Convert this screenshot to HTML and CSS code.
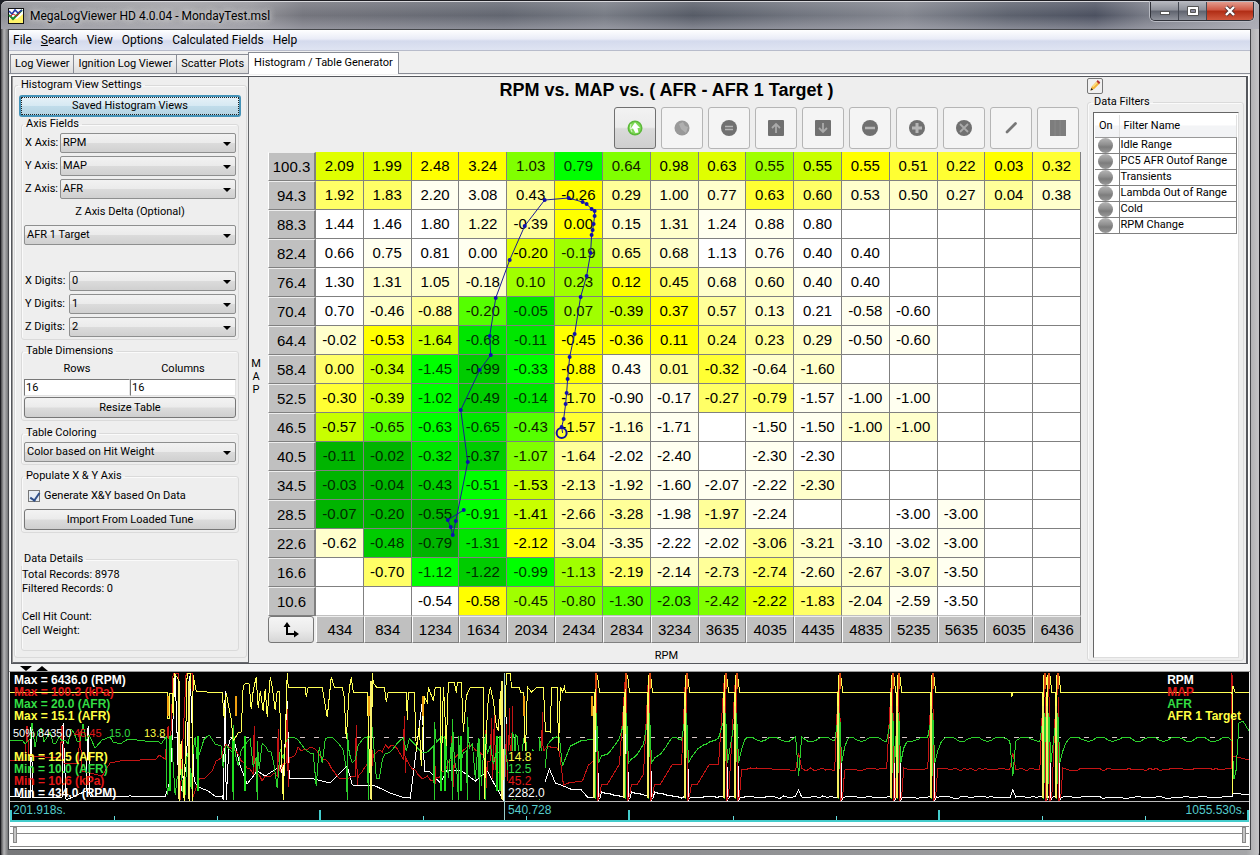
FILE: index.html
```html
<!DOCTYPE html>
<html lang="en">
<head>
<meta charset="utf-8">
<title>MegaLogViewer HD 4.0.04 - MondayTest.msl</title>
<link rel="stylesheet" href="styles.css">
</head>
<body>
<div class="window">
  <header class="titlebar">
    <svg class="app-icon" viewBox="0 0 16 16"><rect width="16" height="16" fill="#111"/><rect x="1" y="1" width="14" height="14" fill="#fff"/><path d="M1 12l4-2 4 1 6-5v9H1z" fill="#fff36a"/><path d="M1 7l4 4L14 2" fill="none" stroke="#1d8a2d" stroke-width="2"/><path d="M1 3l3 3 3-4 3 3 4-3" fill="none" stroke="#2038a8" stroke-width="1.5"/><path d="M2 9l3-3 4 2 3-4" fill="none" stroke="#c22" stroke-width="1"/></svg>
    <h1 class="title">MegaLogViewer HD 4.0.04 - MondayTest.msl</h1>
    <div class="win-controls">
      <button class="win-btn" aria-label="Minimize"><svg width="12" height="12" viewBox="0 0 12 12"><rect x="1.500" y="6.500" width="9" height="3" fill="#fff" stroke="#555"/></svg></button>
      <button class="win-btn" aria-label="Maximize"><svg width="12" height="12" viewBox="0 0 12 12"><path d="M.5 1.500h11v9H.5z" fill="#fff" stroke="#555"/><path d="M3.500 4.500h5v3h-5z" fill="#889" stroke="#555"/></svg></button>
      <button class="win-btn close" aria-label="Close"><svg width="12" height="12" viewBox="0 0 12 12"><path d="M2 2l8 8M10 2l-8 8" stroke="#533" stroke-width="4"/><path d="M2 2l8 8M10 2l-8 8" stroke="#fff" stroke-width="2.400"/></svg></button>
    </div>
  </header>
  <div class="client">
    <nav class="menubar">
      <button>File</button><button><u>S</u>earch</button><button>View</button><button>Options</button><button>Calculated Fields</button><button>Help</button>
    </nav>
    <div class="tabs" role="tablist">
      <button class="tab" role="tab">Log Viewer</button><button class="tab" role="tab">Ignition Log Viewer</button><button class="tab" role="tab">Scatter Plots</button><button class="tab active" role="tab" aria-selected="true">Histogram / Table Generator</button>
    </div>
    <main class="workspace">
      <aside class="settings">
        <fieldset class="group outer">
          <legend>Histogram View Settings</legend>
          <button class="btn focused">Saved Histogram Views</button>
          <fieldset class="group axis">
            <legend>Axis Fields</legend>
            <div class="field"><label for="xa">X Axis:</label><span class="combo"><select id="xa"><option>RPM</option></select></span></div>
            <div class="field"><label for="ya">Y Axis:</label><span class="combo"><select id="ya"><option>MAP</option></select></span></div>
            <div class="field"><label for="za">Z Axis:</label><span class="combo"><select id="za"><option>AFR</option></select></span></div>
            <label class="delta" for="zd">Z Axis Delta (Optional)</label>
            <span class="combo"><select id="zd"><option>AFR 1 Target</option></select></span>
            <div class="digits">
              <div class="field wide"><label for="xd">X Digits:</label><span class="combo"><select id="xd"><option>0</option></select></span></div>
              <div class="field wide"><label for="yd">Y Digits:</label><span class="combo"><select id="yd"><option>1</option></select></span></div>
              <div class="field wide"><label for="zdg">Z Digits:</label><span class="combo"><select id="zdg"><option>2</option></select></span></div>
            </div>
          </fieldset>
          <fieldset class="group dims">
            <legend>Table Dimensions</legend>
            <div class="dim-grid">
              <label for="rows">Rows</label><label for="cols">Columns</label>
              <input id="rows" type="text" value="16"><input id="cols" type="text" value="16">
            </div>
            <button class="btn">Resize Table</button>
          </fieldset>
          <fieldset class="group coloring">
            <legend><label for="tc">Table Coloring</label></legend>
            <span class="combo"><select id="tc"><option>Color based on Hit Weight</option></select></span>
          </fieldset>
          <fieldset class="group populate">
            <legend>Populate X &amp; Y Axis</legend>
            <label class="check"><input type="checkbox" checked>Generate X&amp;Y based On Data</label>
            <button class="btn">Import From Loaded Tune</button>
          </fieldset>
          <fieldset class="group details">
            <legend>Data Details</legend>
            <p>Total Records: 8978</p>
            <p>Filtered Records: 0</p>
            <p class="spaced">Cell Hit Count:</p>
            <p>Cell Weight:</p>
          </fieldset>
        </fieldset>
      </aside>
      <section class="histogram">
        <div class="y-label"><span>M</span><span>A</span><span>P</span></div>
        <div class="chart">
          <h2 class="chart-title">RPM vs. MAP vs. ( AFR - AFR 1 Target )</h2>
          <div class="toolbar">
            <button class="tool on" aria-label="Send up"><svg viewBox="0 0 16 16"><circle cx="8" cy="8" r="7.500" fill="#5cb83a"/><circle cx="8" cy="8" r="6" fill="#7fd957"/><path d="M8 2.500L13 8h-2.500l1 4.500-3 .5L6 8.500 3.500 9z" fill="#fff"/><path d="M4 4q-2 4 1 8" stroke="#d8f5c8" fill="none"/></svg></button>
            <button class="tool" aria-label="Send down"><svg viewBox="0 0 16 16"><circle cx="8" cy="8" r="7.500" fill="#999"/><path d="M5 4l4-2 2 4 3 1-2 6-5-4z" fill="#b0b0b0"/></svg></button>
            <button class="tool" aria-label="Set equal"><svg viewBox="0 0 16 16"><circle cx="8" cy="8" r="8" fill="#707070"/><path d="M4 6.500h8M4 9.500h8" stroke="#b5b5b5" stroke-width="1.500"/></svg></button>
            <button class="tool" aria-label="Increase"><svg viewBox="0 0 16 16"><rect width="16" height="16" rx="1" fill="#707070"/><path d="M8 13V4M4 8l4-4 4 4" stroke="#aaa" stroke-width="1.800" fill="none"/></svg></button>
            <button class="tool" aria-label="Decrease"><svg viewBox="0 0 16 16"><rect width="16" height="16" rx="1" fill="#707070"/><path d="M8 3v9M4 8l4 4 4-4" stroke="#aaa" stroke-width="1.800" fill="none"/></svg></button>
            <button class="tool" aria-label="Subtract"><svg viewBox="0 0 16 16"><circle cx="8" cy="8" r="8" fill="#707070"/><path d="M3 8h10" stroke="#b5b5b5" stroke-width="2.500"/></svg></button>
            <button class="tool" aria-label="Add"><svg viewBox="0 0 16 16"><circle cx="8" cy="8" r="8" fill="#707070"/><path d="M3 8h10M8 3v10" stroke="#b5b5b5" stroke-width="3"/></svg></button>
            <button class="tool" aria-label="Multiply"><svg viewBox="0 0 16 16"><circle cx="8" cy="8" r="8" fill="#707070"/><path d="M4 4l8 8M12 4l-8 8" stroke="#aaa" stroke-width="1.800"/></svg></button>
            <button class="tool" aria-label="Interpolate"><svg viewBox="0 0 16 16"><path d="M4 12l8.500-8.500" stroke="#777" stroke-width="2.800" stroke-linecap="round"/></svg></button>
            <button class="tool" aria-label="Smooth"><svg viewBox="0 0 16 16"><rect width="16" height="16" fill="#7d7d7d"/><path d="M5 0v16M10 0v16" stroke="#898989"/></svg></button>
          </div>
          <div class="grid-wrap">
            <table class="grid" id="grid"></table>
            <svg class="trace" viewBox="0 0 814 491" preserveAspectRatio="none" id="trace"></svg>
          </div>
          <div class="x-label">RPM</div>
        </div>
      </section>
      <aside class="filters">
        <button class="edit" aria-label="Edit filters"><svg viewBox="0 0 16 16"><path d="M2 14l1.500-5L10 2l4 3-7 7z" fill="#f3b53a"/><path d="M5 9l6-6" stroke="#fde08a" stroke-width="2"/><path d="M10 2l1.500-2L15 3l-1.500 2.500z" fill="#b53030"/><path d="M2 14l1-3.500L5.500 13z" fill="#222"/></svg></button>
        <fieldset class="group filter-group">
          <legend>Data Filters</legend>
          <div class="filter-box">
            <table class="filter-table">
              <thead><tr><th>On</th><th>Filter Name</th></tr></thead>
              <tbody>
                <tr><td><i class="lamp"></i></td><td>Idle Range</td></tr>
                <tr><td><i class="lamp"></i></td><td>PC5 AFR Outof Range</td></tr>
                <tr><td><i class="lamp"></i></td><td>Transients</td></tr>
                <tr><td><i class="lamp"></i></td><td>Lambda Out of Range</td></tr>
                <tr><td><i class="lamp"></i></td><td>Cold</td></tr>
                <tr><td><i class="lamp"></i></td><td>RPM Change</td></tr>
              </tbody>
            </table>
          </div>
        </fieldset>
      </aside>
    </main>
    <div class="splitter"><i class="down"></i><i class="up"></i></div>
    <section class="log">
      <svg class="plot" id="plot" viewBox="10 671 1238 150" preserveAspectRatio="none"></svg>
      <div class="legend-block max"><span class="w">Max = 6436.0 (RPM)</span><span class="r">Max = 100.3 (kPa)</span><span class="g">Max = 20.0 (AFR)</span><span class="y">Max = 15.1 (AFR)</span></div>
      <div class="mid"><span class="w">50%</span><span class="w">8435.0</span><span class="r">45.45</span><span class="g">15.0</span><span class="y">13.8</span></div>
      <div class="legend-block min"><span class="y">Min = 12.5 (AFR)</span><span class="g">Min = 10.0 (AFR)</span><span class="r">Min = 10.6 (kPa)</span><span class="w">Min = 434.0 (RPM)</span></div>
      <div class="legend-block cursor"><span class="y">14.8</span><span class="g">12.5</span><span class="r">45.2</span><span class="w">2282.0</span></div>
      <div class="legend-block names"><span class="w">RPM</span><span class="r">MAP</span><span class="g">AFR</span><span class="y">AFR 1 Target</span></div>
      <span class="time start">201.918s.</span><span class="time now">540.728</span><span class="time end">1055.530s.</span>
    </section>
    <div class="slider">
      <input type="range" min="0" max="100" value="0" aria-label="Range start">
      <input type="range" min="0" max="100" value="100" aria-label="Range end">
    </div>
  </div>
</div>
<script src="app.js"></script>
</body>
</html>
```
FILE: styles.css
```css
* { box-sizing: border-box; }
body { margin: 0; background: #1c1f26; font: 11px/14px Roboto, "Noto Sans", sans-serif; color: #000; }
button, input, select { font: inherit; color: inherit; margin: 0; padding: 0; }
p, h1, h2 { margin: 0; font-weight: normal; }

.window {
  min-height: 100vh; display: flex; flex-direction: column; padding: 0 8px 7px 7px;
  border: 1px solid #1d1d22; border-radius: 7px 7px 5px 5px;
  background: linear-gradient(90deg, #4a4a4c 0, #b4b4b6 3px, #77787a 7px, #8c8d90 50%, #a5a6a8 99%, #c5c5c7 100%);
}
.titlebar {
  height: 28px; margin: 0 -8px 0 -7px; padding-left: 7px; display: flex; align-items: center;
  border-top: 1px solid #d8d8dc; border-radius: 6px 6px 0 0;
  background: linear-gradient(180deg, rgba(220,220,225,.2), rgba(0,0,0,0) 50%, rgba(180,180,190,.5)),
    linear-gradient(90deg, #8f9095 0, #a3a3a7 14%, #96969b 20%, #74757d 24%, #626670 40%, #777b84 48%, #565b66 55%, #6f737d 63%, #83868f 72%, #5d626e 80%, #4c5160 87%, #777a85 91%, #a9abb2 100%);
}
.app-icon { width: 16px; height: 16px; margin-right: 6px; }
.title { flex: 1; font-size: 12px; text-shadow: 0 0 6px #ddd, 0 0 6px #ddd; }
.win-controls { display: flex; align-self: flex-start; margin-right: 5px; border: 1px solid #30323a; border-top: 0; border-radius: 0 0 5px 5px; overflow: hidden; box-shadow: 0 0 0 1px #b9bbc3; }
.win-btn { width: 28px; height: 18px; border: 0; border-right: 1px solid #444852; background: linear-gradient(#b4b6bd, #8d9099 45%, #5f636e 50%, #8f929b); display: grid; place-items: center; }
.win-btn.close { width: 46px; border-right: 0; background: linear-gradient(#e39b8d, #cf5743 45%, #b02c14 50%, #d0583e); }

.client { flex: 1; display: flex; flex-direction: column; background: #f0f0f0; border: 1px solid #44464a; }
.menubar { height: 21px; display: flex; align-items: center; gap: 9px; padding-left: 4px; font-size: 12px; background: linear-gradient(#fff, #e9ecf7 45%, #d4daed 55%, #dfe4f2); border-bottom: 1px solid #b8bccb; }
.menubar button { border: 0; background: none; white-space: nowrap; }
.tabs { height: 23px; display: flex; align-items: flex-end; padding: 2px 1px 0; border-bottom: 1px solid #898c95; }
.tab { height: 19px; padding: 0 4px; border: 1px solid #898c95; border-bottom: 0; border-right: 0; background: linear-gradient(#f4f4f4, #ebebeb 50%, #dcdcdc); white-space: nowrap; }
.tab.active { height: 22px; border-right: 1px solid #898c95; background: #fff; padding: 0 5px 2px; margin-bottom: -1px; position: relative; }

.workspace { flex: 1; display: grid; grid-template-columns: 237px 1fr 159px; margin: 2px 2px 0; border: 1px solid #55575c; border-width: 1px 2px 1px 1px; background: #eee; outline: 1px solid #fff; }
.settings { border-right: 1px solid #66686c; border-bottom: 1px solid #66686c; border-left: 1px solid #999; padding: 1px 1px 3px 1px; }
.group { margin: 0; padding: 0; min-width: 0; border: 1px solid #dadada; border-radius: 3px; box-shadow: inset 1px 1px #fafafa; }
.group legend { padding: 0 3px; margin-left: -1px; height: 14px; white-space: nowrap; }
.outer { padding: 3px 5px 6px 4px; }
.outer > .group { margin: 0 2px; padding: 2px 2px; }
.outer > .group > legend { margin-left: -1px; }
.btn { display: block; width: 100%; height: 21px; border: 1px solid #777; border-radius: 3px; background: linear-gradient(#f3f3f3, #ebebeb 48%, #dcdcdc 52%, #cfcfcf); }
.btn.focused { height: 22px; border: 2px solid #4593b8; background: linear-gradient(#e6f1f7, #d6e9f3 48%, #c0dcea 52%, #b4d3e2); outline: 1px dotted #222; outline-offset: -3px; }
.field { display: grid; grid-template-columns: 36px 1fr; align-items: center; margin-bottom: 3px; }
.field.wide { grid-template-columns: 45px 1fr; }
.field label { white-space: nowrap; padding-left: 1px; }
.combo { position: relative; display: block; }
.combo select { display: block; width: 100%; height: 20px; padding-left: 2px; appearance: none; border: 1px solid #8e8f8f; border-radius: 2px; background: linear-gradient(#f2f2f2, #ebebeb 48%, #dbdbdb 52%, #d0d0d0); }
.combo::after { content: ""; position: absolute; right: 5px; top: 9px; border: 4px solid transparent; border-top-color: #000; border-bottom: 0; pointer-events: none; }
.delta { display: block; text-align: center; margin: 6px 0; }
.digits { margin-top: 26px; }
.digits .field:last-child { margin-bottom: 0; }
.outer > .dims { margin-top: 4px; }
.dim-grid { display: grid; grid-template-columns: 1fr 1fr; text-align: center; row-gap: 3px; padding-top: 2px; margin-bottom: 1px; }
.dim-grid input { width: 100%; height: 17px; border: 1px solid #e3e3e3; border-top-color: #777; border-left-color: #777; background: #fff; padding-left: 1px; }
.outer > .coloring { margin-top: 5px; }
.outer > .populate { margin-top: 4px; }
.check { display: flex; align-items: center; margin: 4px 0 6px 4px; height: 14px; gap: 4px; }
.check input { appearance: none; width: 12px; height: 12px; border: 1px solid #777; background: #e6edf5; position: relative; }
.check input:checked::after { content: ""; position: absolute; left: 3px; top: 0; width: 4px; height: 8px; border: solid #2f4f8a; border-width: 0 2px 2px 0; transform: rotate(35deg); }
.outer > .details { margin-top: 19px; min-height: 99px; padding-left: 0; }
.details p.spaced { margin-top: 14px; }

.histogram { display: grid; grid-template-columns: 14px 1fr; }
.y-label { display: flex; flex-direction: column; justify-content: center; align-items: center; line-height: 13px; padding-top: 12px; }
.chart { min-width: 0; padding: 2px 6px 0 5px; }
.chart-title { font: bold 18px/22px "Liberation Sans", Arial, sans-serif; text-align: center; padding-right: 16px; }
.toolbar { display: flex; justify-content: flex-end; gap: 5px; margin: 6px 2px 3px; }
.tool { width: 42px; height: 42px; border: 1px solid #b5b5b5; border-radius: 3px; background: #f4f4f4; display: grid; place-items: center; }
.tool svg { width: 16px; height: 16px; }
.tool.on { border-color: #707070; background: linear-gradient(#f2f2f2, #ebebeb 48%, #dadada 52%, #cfcfcf); }
.grid-wrap { position: relative; }
.grid { width: 100%; table-layout: fixed; border-collapse: separate; border-spacing: 0; font: 15px/28px "Liberation Sans", Arial, sans-serif; text-align: center; }
.grid td, .grid th { padding: 0; height: 29px; font-weight: normal; border-right: 1px solid #808080; border-bottom: 1px solid #808080; white-space: nowrap; }
.grid tr:nth-child(16) td { border-bottom-color: #c0c0c0; }
.grid th { background: #c0c0c0; border-left: 1px solid #fff; border-top: 1px solid #eee; line-height: 27px; }
.grid tr:last-child th { height: 27px; line-height: 25px; }
.grid .row-head { width: 48px; border-right: 2px solid #808080; }
.corner { width: 46px; height: 27px; border: 1px solid #777; border-radius: 3px; background: linear-gradient(#f5f5f5, #ebebeb 50%, #d6d6d6); display: grid; place-items: center; }
.grid .corner-cell { border: 0; background: #eee; }
.c0 { background: #fff; } .ca { background: #fffff0; } .cb { background: #ffffcc; } .cc { background: #ffff99; }
.cd { background: #ffff66; } .ce { background: #ffff33; } .cf { background: #ffff00; } .cg { background: #e0ff00; }
.ch { background: #c8ff00; } .ci { background: #a0ff00; } .cj { background: #80ff00; } .ck { background: #55ff00; }
.cl { background: #00ff00; } .cm { background: #00e600; } .cn { background: #00cc00; } .co { background: #00b400; }
.cj, .ck, .ci { color: #121a00; } .cl, .cm { color: #003600; } .cn, .co { color: #002c00; }
.trace { position: absolute; left: 0; top: 0; width: 100%; height: 100%; pointer-events: none; }
.x-label { text-align: center; margin-top: 6px; padding-right: 16px; }

.filters { display: flex; flex-direction: column; padding: 1px 2px 2px 0; }
.edit { width: 16px; height: 16px; padding: 1px; border: 1px solid #777; border-radius: 2px; background: #f0f0f0; display: grid; }
.filter-group { flex: 1; display: flex; flex-direction: column; margin-top: 1px; padding: 3px 4px 2px 5px; }
.filter-group legend { margin-left: -2px; }
.filter-box { height: 546px; background: #fff; border: 1px solid #ddd; border-top-color: #666; border-left-color: #666; padding: 2px 1px 0 1px; }
.filter-table { width: 100%; border-collapse: collapse; table-layout: fixed; }
.filter-table th { height: 22px; font-weight: normal; text-align: left; padding: 0 0 0 4px; background: linear-gradient(#fff, #fff 45%, #f3f4f6 50%, #f1f2f4); border-right: 1px solid #e0e0e0; border-bottom: 1px solid #999; white-space: nowrap; }
.filter-table th:first-child { width: 24px; padding-left: 4px; }
.filter-table td { height: 16px; padding: 0 0 0 1px; line-height: 14px; border: 1px solid #808080; white-space: nowrap; }
.filter-table td:first-child { border-left: 0; }
.lamp { display: block; width: 15px; height: 15px; margin-left: 2px; border-radius: 50%; background: linear-gradient(#b5b5b5, #8f8f8f 45%, #7c7c7c 60%, #999); }

.splitter { height: 8px; display: flex; gap: 4px; padding: 2px 11px 0; background: #f4f4f4; border-bottom: 1px solid #999; }
.splitter i { width: 12px; height: 5px; background: #000; }
.splitter .down { clip-path: polygon(0 0, 100% 0, 50% 100%); }
.splitter .up { clip-path: polygon(50% 0, 100% 100%, 0 100%); }
.log { position: relative; height: 150px; margin: 0 1px; background: #000; font: 12px/12px "Liberation Sans", Arial, sans-serif; }
.plot { display: block; width: 100%; height: 100%; shape-rendering: crispEdges; }
.plot path { fill: none; vector-effect: non-scaling-stroke; }
.legend-block { position: absolute; display: flex; flex-direction: column; white-space: nowrap; }
.max, .min, .names { font-weight: bold; left: 4px; }
.max { top: 2px; } .min { top: 79px; } .cursor { top: 79px; left: 40.200%; background: #000; }
.names { top: 2px; left: auto; right: 8px; }
.mid { position: absolute; top: 55px; left: 3px; display: grid; grid-template-columns: 25px 36px 35px 35px 30px; font-size: 11px; }
.w { color: #fff; } .r { color: #e01818; } .g { color: #33dd44; } .y { color: #ffff44; }
.time { position: absolute; top: 132px; color: #5cc; }
.start { left: 3px; } .now { left: 40.200%; } .end { right: 4px; }
.slider { height: 27px; margin: 0 1px; display: grid; align-items: start; padding: 4px 0; background: linear-gradient(#fff 0 4px, #888 4px 5px, #fff 5px 11px, #888 11px 12px, #fff 12px 24px, #888 24px 25px, #fff 25px); }
.slider input { grid-area: 1 / 1; appearance: none; width: 100%; height: 18px; padding: 0 3px; background: none; pointer-events: none; }
.slider input::-webkit-slider-thumb { appearance: none; pointer-events: auto; width: 4px; height: 16px; background: #c4c4c4; border: 1px solid #888; }
```
FILE: app.js
```js
const rowHeads = ['100.3','94.3','88.3','82.4','76.4','70.4','64.4','58.4','52.5','46.5','40.5','34.5','28.5','22.6','16.6','10.6'];
const colHeads = [434,834,1234,1634,2034,2434,2834,3234,3635,4035,4435,4835,5235,5635,6035,6436];
const values = [
  '2.09 1.99 2.48 3.24 1.03 0.79 0.64 0.98 0.63 0.55 0.55 0.55 0.51 0.22 0.03 0.32',
  '1.92 1.83 2.20 3.08 0.43 -0.26 0.29 1.00 0.77 0.63 0.60 0.53 0.50 0.27 0.04 0.38',
  '1.44 1.46 1.80 1.22 -0.39 0.00 0.15 1.31 1.24 0.88 0.80',
  '0.66 0.75 0.81 0.00 -0.20 -0.19 0.65 0.68 1.13 0.76 0.40 0.40',
  '1.30 1.31 1.05 -0.18 0.10 0.23 0.12 0.45 0.68 0.60 0.40 0.40',
  '0.70 -0.46 -0.88 -0.20 -0.05 0.07 -0.39 0.37 0.57 0.13 0.21 -0.58 -0.60',
  '-0.02 -0.53 -1.64 -0.68 -0.11 -0.45 -0.36 0.11 0.24 0.23 0.29 -0.50 -0.60',
  '0.00 -0.34 -1.45 -0.99 -0.33 -0.88 0.43 0.01 -0.32 -0.64 -1.60',
  '-0.30 -0.39 -1.02 -0.49 -0.14 -1.70 -0.90 -0.17 -0.27 -0.79 -1.57 -1.00 -1.00',
  '-0.57 -0.65 -0.63 -0.65 -0.43 -1.57 -1.16 -1.71 . -1.50 -1.50 -1.00 -1.00',
  '-0.11 -0.02 -0.32 -0.37 -1.07 -1.64 -2.02 -2.40 . -2.30 -2.30',
  '-0.03 -0.04 -0.43 -0.51 -1.53 -2.13 -1.92 -1.60 -2.07 -2.22 -2.30',
  '-0.07 -0.20 -0.55 -0.91 -1.41 -2.66 -3.28 -1.98 -1.97 -2.24 . . -3.00 -3.00',
  '-0.62 -0.48 -0.79 -1.31 -2.12 -3.04 -3.35 -2.22 -2.02 -3.06 -3.21 -3.10 -3.02 -3.00',
  '. -0.70 -1.12 -1.22 -0.99 -1.13 -2.19 -2.14 -2.73 -2.74 -2.60 -2.67 -3.07 -3.50',
  '. . -0.54 -0.58 -0.45 -0.80 -1.30 -2.03 -2.42 -2.22 -1.83 -2.04 -2.59 -3.50'
].map(r => r.split(' '));
// One letter per cell: hit weight from white (0) through yellow (f) to dark green (o).
const weights = [
  'ggffjljhgihfeefe', 'ddaacfcbbedbbbcb', '000bcfbbaa000000', '0a0agicb0a000000',
  '0bbbiifdbba00000', '0bckmihfcb0a0000', 'bfhmmfffdcbaa000', 'dhlnlfacebb00000',
  'ehlnmeaaddaaa000', 'hklmkeba0aabb000', 'oomnjcaa0a000000', 'oonlhcbaaab00000',
  'ooolhccaca000a00', 'bnomfcb0acbaaa00', '0dlnlidbcdbbba00', '000fijkkjgdba000'
];

const grid = document.getElementById('grid');
grid.innerHTML = rowHeads.map((h, r) =>
  `<tr><th class="row-head">${h}</th>` +
  colHeads.map((_, c) => {
    const v = values[r][c];
    return `<td class="c${weights[r][c]}">${v && v !== '.' ? v : ''}</td>`;
  }).join('') + '</tr>').join('') +
  '<tr><th class="corner-cell"><button class="corner" aria-label="Swap axes"><svg width="18" height="18" viewBox="0 0 18 18"><path d="M5 3v10h10" fill="none" stroke="#000" stroke-width="2"/><path d="M1.500 6L5 1l3.500 5zM12 9.500l5 3.500-5 3.500z"/></svg></button></th>' +
  colHeads.map(c => `<th>${c}</th>`).join('') + '</tr>';

const route = [[464,510],[448,520],[451,527],[453,535],[456,521],[468,462],[461,410],[480,370],[491,355],[490,336],[496,298],[510,260],[525,226],[545,200],[569,198],[583,202],[587,204],[592,209],[595,211],[595,216],[594,224],[593,230],[592,235],[591,253],[587,276],[581,297],[575,334],[570,357],[568,379],[567,393],[566,404],[564,419],[562,427],[563,433]]
  .map(([x, y]) => [x - 268, y - 152]);
document.getElementById('trace').innerHTML =
  `<polyline points="${route.join(' ')}" fill="none" stroke="#1a1a99"/>` +
  route.slice(0, -1).map(([x, y]) => `<circle cx="${x}" cy="${y}" r="2" fill="#1010b0"/>`).join('') +
  '<circle cx="294" cy="281" r="5" fill="none" stroke="#1010a0" stroke-width="2"/>';

let seed = 7;
const rnd = (a, b) => { seed = (seed * 16807) % 2147483647; return a + (b - a) * (seed / 2147483647); };
const spikes = [595, 625, 648, 685, 724, 735, 838, 891, 897, 931, 1043, 1047, 1056];
const yellow = [], green = [], red = [], white = [];
const add = (a, x, y) => a.push([Math.round(x), Math.round(y)]);
const addAll = (a, text) => text.split(' ').forEach(p => add(a, ...p.split(',').map(Number)));

// Idle stretch at the left edge.
addAll(yellow, '10,691 167,691 167,717 169,717 169,692 172,692 173,715 174,672 178,678 179,800 181,740 184,800 187,672 190,672 189,800 192,800 193,674 196,690 207,691 222,691');
addAll(green, '10,739 22,739 25,743 30,738');
for (let x = 32; x < 92; x += 3) add(green, x, rnd(722, 748));
addAll(green, '95,747 102,739 110,736 113,741 120,743 128,738 145,740 158,740 161,743 166,736');
for (let x = 167; x < 196; x += 2) add(green, x, rnd(725, 800));
addAll(green, '197,760 204,738 209,734 215,743 221,745');
addAll(red, '10,759 25,759 27,725 29,755 60,757 62,725 64,762 78,762 80,730 82,770 102,775 110,762 120,760 140,759 156,758 159,754 165,758 168,725 170,755 173,672 178,672 180,799 186,672 192,672 192,799 199,778 205,777 212,770 216,760 221,757');
addAll(white, '10,795 30,797 31,725 33,797 62,796 63,722 66,799 86,790 88,725 90,796 130,795 165,796 170,780 175,672 179,799 186,765 190,672 194,780 198,786 208,790 216,796 222,795');

// Driving section with rapidly changing load.
addAll(yellow, '222,691 224,717 226,692 231,718 233,740 238,732 241,731 243,685 246,682 249,683 251,708 253,690 256,676 258,707 260,690 263,710 265,688 267,716 270,676 272,686 275,709 277,690 279,690 283,799 285,740 287,672 288,686 305,686 306,696 308,686 322,686 327,716 331,676 334,686 342,686 344,696 346,738 349,688 351,676 353,691 367,691 369,757 371,799 372,672 373,682 376,686 384,686 386,701 388,691 406,691 407,719 408,691 414,691 416,750 419,725 421,765 424,696 427,702 428,686 433,700 435,686 440,686 441,770 443,686 444,701 446,745 448,681 454,681 456,692 457,681 461,681 463,731 466,695 470,686 483,686 484,798 486,730 488,696 490,686 493,700 496,725 498,730 500,690 502,799 506,672 510,672 511,686 519,686 520,691 523,691 525,755 527,686 531,691 537,686 543,686 545,730 550,731 551,686 557,686 558,750 560,686 562,691 564,686 565,691 592,691');
addAll(white, '222,795 223,799 225,690 226,799 229,740 233,735 240,765 247,783 257,770 265,775 280,765 283,777 287,700 289,777 310,777 330,782 347,765 352,784 375,785 390,792 402,796 410,797 422,700 424,770 430,771 440,782 446,770 460,769 475,780 487,770 495,785 503,799 505,690 507,775 535,777 545,780 549,768 555,782 563,785');
for (let x = 223; x < 562; x += 3) {
  const calm = x > 288 && x < 310 || x > 325 && x < 345 || x > 355 && x < 366 || x > 385 && x < 402;
  const base = 744 + 8 * Math.sin(x / 6);
  add(green, x, !calm && rnd(0, 1) < .45 ? rnd(750, 790) : base);
  if (!calm && rnd(0, 1) < .22) { add(green, x + 1, 799); add(green, x + 1, rnd(715, 740)); }
  add(red, x, 762 + 16 * Math.sin(x / 13) + rnd(-3, 3));
  if (!calm && rnd(0, 1) < .13) { add(red, x + 1, rnd(705, 730)); add(red, x + 2, rnd(765, 788)); }
}
addAll(green, '562,765 570,745 580,740 593,738');
addAll(red, '563,784 568,782 582,780 588,764 593,760');
addAll(white, '570,788 580,788 587,796 593,796');

// Cruise with a burst of throttle at each spike.
spikes.forEach((x, i) => {
  const next = spikes[i + 1] || 1231;
  add(yellow, x - 1, 691); add(yellow, x - 1, 797); add(yellow, x, 674); add(yellow, x + 2, 674); add(yellow, x + 4, 691);
  add(red, x, 674); add(red, x + 1, 674); add(red, x + 2, 800); add(red, x + 4, 795);
  add(green, x - 1, 720); add(green, x, 798); add(green, x + 1, 712); add(green, x + 3, 762);
  add(white, x, 795); add(white, x, 720); add(white, x + 2, 740); add(white, x + 3, 799); add(white, x + 5, 796);
  if (next - x < 14) return;
  const early = x < 700;
  for (let t = x + 6; t < next - 3; t += 3) {
    const k = Math.min(1, (t - x) / (early ? 25 : 10));
    const dip = Math.abs(t - (x === 735 ? 798 : x === 931 ? 1013 : -99)) < 2;
    add(green, t, dip ? 775 : 762 - 24 * k + 2.500 * Math.sin(t / 4));
    add(red, t, dip ? 752 : early ? 783 - 20 * Math.min(1, Math.max(0, (t - x - 12) / 12)) : 768 + rnd(-1.500, 1.500));
    add(white, t, dip ? 789 : early && x < 660 ? 790 + (t - x) / 5 : 796 + rnd(-1, 1));
  }
  if (x === 931) addAll(yellow, '1011,691 1011,696 1012,691');
});
addAll(yellow, '1231,691 1232,793 1232,685 1234,691 1248,691');
addAll(green, '1231,740 1233,778 1235,770 1238,722 1242,720 1248,730');
addAll(red, '1231,768 1231,672 1232,755 1248,759');
addAll(white, '1231,796 1232,792 1248,794');

const path = (pts, color) => `<path d="M${pts.map(p => p.join(',')).join('L')}" stroke="${color}"/>`;
const streaks = (xs, y1, y2, color) => `<path d="${xs.map(x => `M${x},${y1}V${y2}`).join('')}" stroke="${color}" stroke-width="2"/>`;
let major = '', minor = '';
for (let i = 0; i <= 12; i++) {
  const x = 11 + i * 103;
  if (i % 3 === 0) major += `M${x},809V820`; else minor += `M${x + 0.500},815V820`;
}
document.getElementById('plot').innerHTML =
  '<path d="M160,736.500H1248" stroke="#d8c8c8" stroke-dasharray="5 9"/>' +
  path(white, '#fff') + path(red, '#c41414') + path(green, '#2cd02c') +
  streaks([170, 198, 233, 245, 441, 445, 461, 497, 500], 735, 790, '#20e020') +
  path(yellow, '#ffff55') +
  streaks([168, 236, 369, 423, 524, 592], 695, 715, '#f0a010') +
  streaks([179, 189, 371, 502], 680, 798, '#f8f070') +
  streaks(spikes.map(x => x + 1), 672, 688, '#d84a10') +
  streaks(spikes.map(x => x - 1), 705, 797, '#f4f060') +
  '<path d="M10,800.500H1248" stroke="#bbb"/>' +
  '<path d="M504.500,672V820" stroke="#9cc"/>' +
  `<path d="${minor}" stroke="#6dd"/><path d="${major}M10,820H1248" stroke="#4cc" stroke-width="2"/>`;
```
